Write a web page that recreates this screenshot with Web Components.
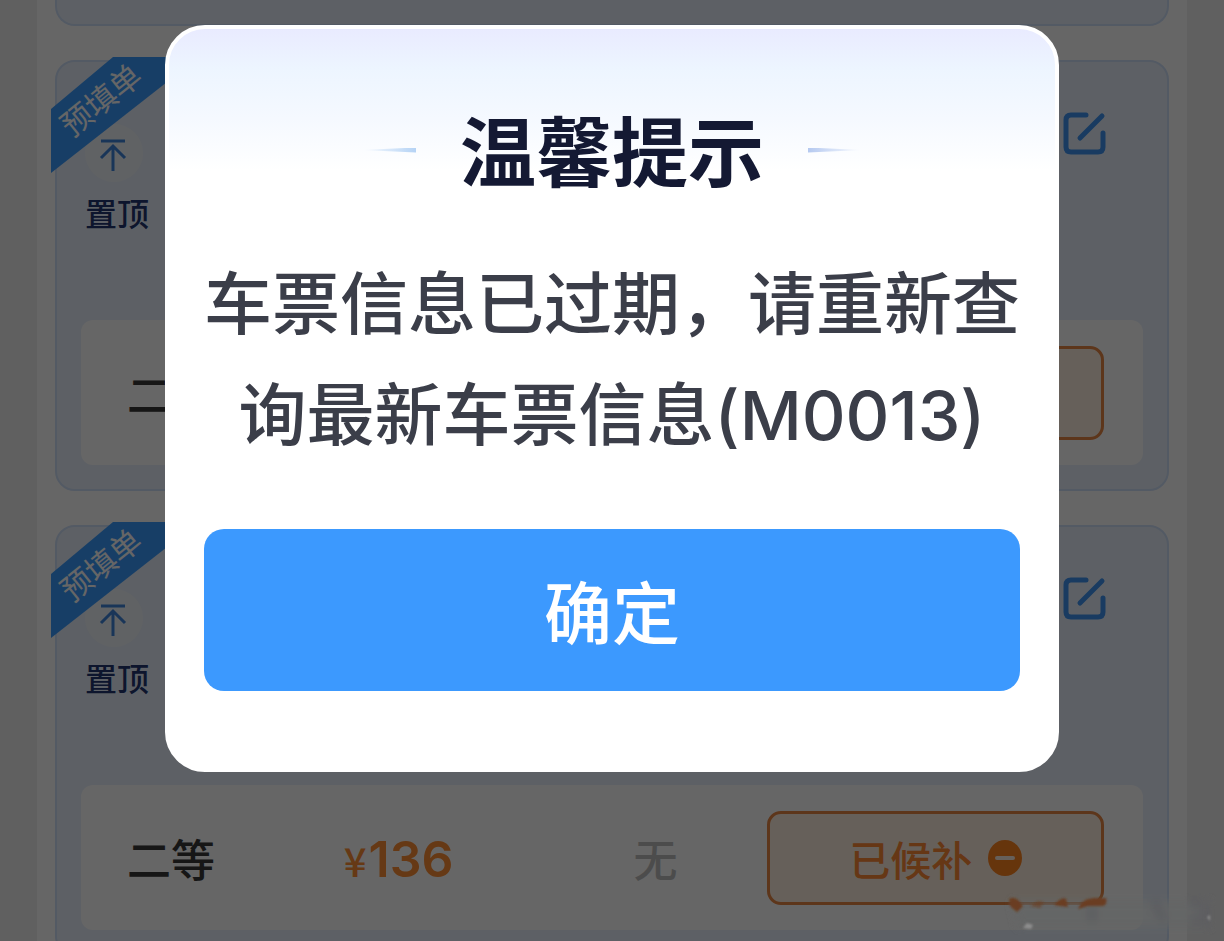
<!DOCTYPE html>
<html lang="zh-CN">
<head>
<meta charset="utf-8">
<meta name="viewport" content="width=device-width, initial-scale=1">
<title>温馨提示</title>
<style>
body { margin: 0; height: 100vh; overflow: hidden; background: #f1f1f1; font-family: "Noto Sans CJK SC", sans-serif; }
</style>
</head>
<body>
<order-page></order-page>

<template id="order-page">
<style>
:host { display: block; position: relative; height: 100%; overflow: hidden; }
main { box-sizing: border-box; margin: 0 37px; padding: 0 18px; background: #fff; display: flex; flex-direction: column; gap: 34px; }
.prev { height: 24px; border: 2px solid #cfe0fa; border-top: 0; border-radius: 0 0 20px 20px; background: #e9f1fc; }
</style>
<main>
  <div class="prev"></div>
  <ticket-card seat="二"></ticket-card>
  <ticket-card seat="二等" price="136" left="无" state="已候补"></ticket-card>
</main>
<water-mark></water-mark>
<notice-dialog heading="温馨提示" action="确定">车票信息已过期，请重新查询最新车票信息(M0013)</notice-dialog>
</template>

<template id="ticket-card">
<style>
:host { display: flex; flex-direction: column; position: relative; box-sizing: border-box; height: 431px; padding: 0 24px 24px; border: 2px solid #cfe0fa; border-radius: 20px; background: #e9f1fc; }
header { flex: 1; display: flex; justify-content: space-between; align-items: flex-start; }
button { font: inherit; border: 0; padding: 0; background: none; }
.pin { display: flex; flex-direction: column; align-items: flex-start; gap: 6px; margin: 62px 0 0 4px; color: #223570; font-size: 32px; line-height: 48px; font-weight: 500; }
.pin svg { display: block; }
.edit { margin: 48px 34px 0 0; }
.edit svg { display: block; }
</style>
<header>
  <button class="pin" type="button">
    <svg width="58" height="58" viewBox="0 0 58 58" fill="none" stroke="#3f86dc" stroke-width="3"><circle cx="29" cy="29" r="29" fill="#f1f5fb" stroke="none"/><path d="M16 17H40M28 47V22M16 34L28 22L40 34"/></svg>
    置顶
  </button>
  <button class="edit" type="button" aria-label="编辑">
    <svg width="48" height="48" viewBox="0 0 48 48" fill="none" stroke="#3f93f2" stroke-width="5" stroke-linecap="round" stroke-linejoin="round"><path d="M25 5H10Q5 5 5 10V37Q5 42 10 42H37Q42 42 42 37V23M41 6L19 28"/></svg>
  </button>
</header>
<corner-ribbon>预填单</corner-ribbon>
<seat-row></seat-row>
</template>

<template id="corner-ribbon">
<style>
:host { display: block; position: absolute; left: -6px; top: -5px; width: 148px; height: 116px; background: #3b9cff; clip-path: polygon(62px 0, 148px 0, 0 116px, 0 52px); }
span { position: absolute; left: 0; top: 22px; width: 98px; line-height: 40px; text-align: center; font-size: 31px; color: #fff; transform: rotate(-39deg); }
</style>
<span><slot></slot></span>
</template>

<template id="seat-row">
<style>
:host { display: grid; grid-template-columns: 217fr 290fr 134fr 337fr; align-items: center; box-sizing: border-box; height: 145px; padding: 0 39px 0 46px; border-radius: 12px; background: #fff; font-size: 44px; line-height: 64px; }
.seat { color: #383838; font-weight: 500; }
.price { padding-top: 4px; color: #ff8f35; font: 600 50px/64px Inter, "Noto Sans CJK SC", sans-serif; }
.price:empty { visibility: hidden; }
small { font: 500 40px/64px "Noto Sans CJK SC", sans-serif; margin-right: 2px; }
.left { color: #bdbdbd; font-weight: 500; }
button { box-sizing: border-box; height: 94px; border: 3px solid #e88745; border-radius: 14px; background: #fff0e2; color: #ff8a35; font: 500 41px/60px "Noto Sans CJK SC", sans-serif; display: flex; align-items: center; justify-content: center; gap: 16px; padding: 0; }
</style>
<span class="seat"></span>
<span class="price"></span>
<span class="left"></span>
<button type="button"><span class="state"></span><svg width="34" height="38" viewBox="0 0 34 38"><ellipse cx="17" cy="19" rx="17" ry="18" fill="#ff8420"/><path d="M9 19H25" stroke="#fff0e2" stroke-width="4" stroke-linecap="round"/></svg></button>
</template>

<template id="water-mark">
<style>
:host { display: block; position: absolute; right: 8px; bottom: 4px; z-index: 3; }
svg { display: block; }
</style>
<svg width="212" height="48" viewBox="0 0 212 48" aria-hidden="true">
  <defs><filter id="soft" x="-10%" y="-30%" width="120%" height="160%"><feGaussianBlur stdDeviation="4"/></filter><filter id="fine"><feGaussianBlur stdDeviation="1"/></filter></defs>
  <g filter="url(#soft)"><path d="M8 12H206V38H14Z" fill="#646566" opacity=".8"/><path d="M88 14V34M150 12L160 32M186 12L202 18V32L186 30" stroke="#55585c" stroke-width="9" fill="none" opacity=".5"/></g>
  <g filter="url(#fine)" fill="#6b3d20"><path d="M5 10Q12 6 19 17L13 23L6 17ZM50 16Q58 7 62 10L64 18ZM74 20Q78 9 92 9H102Q104 16 98 17L84 17Z"/><path d="M26 17L34 12L40 13L36 19Z" opacity=".6"/><path d="M19 39L23 34L29 36L27 40ZM203 28L206 26V32Z" fill="#8d8d8d"/></g>
</svg>
</template>

<template id="notice-dialog">
<style>
:host { position: absolute; inset: 0; box-sizing: border-box; padding: 25px 165px; background: rgba(0, 0, 0, .6); display: block; }
section { box-sizing: border-box; padding: 74px 35px 77px; border: 4px solid #fff; border-radius: 40px; background: linear-gradient(#e9ebff 0, #edf5ff 40px, #f5f9ff 90px, #fff 142px); text-align: center; }
.title { display: flex; align-items: center; justify-content: center; gap: 44px; }
h1 { margin: 0; color: #141933; font-size: 76px; line-height: 90px; font-weight: 700; }
i { width: 54px; height: 5px; margin-top: 4px; background: linear-gradient(90deg, transparent, #b5d3f5); clip-path: polygon(0 50%, 100% 0, 100% 100%); }
i:last-child { background: linear-gradient(270deg, transparent, #b5c9f0); clip-path: polygon(0 0, 100% 50%, 0 100%); }
p { margin: 56px 0 58px; color: #3b3e49; font: 500 68px/111px Inter, "Noto Sans CJK SC", sans-serif; }
button { display: block; width: 100%; height: 162px; padding: 0; border: 0; border-radius: 20px; background: #3c99fe; color: #fff; font: 500 68px/100px "Noto Sans CJK SC", sans-serif; }
</style>
<section role="dialog" aria-modal="true" aria-labelledby="heading">
  <div class="title"><i></i><h1 id="heading"></h1><i></i></div>
  <p><slot></slot></p>
  <button type="button"></button>
</section>
</template>

<script>
class TemplateElement extends HTMLElement {
  connectedCallback() {
    if (this.shadowRoot) return;
    const root = this.attachShadow({ mode: 'open' });
    const content = document.getElementById(this.localName).content.cloneNode(true);
    this.fill(content);
    root.append(content);
  }
  fill() {}
}
class CornerRibbon extends TemplateElement {}
class WaterMark extends TemplateElement {}
class OrderPage extends TemplateElement {}
class TicketCard extends TemplateElement {
  fill(root) {
    const row = root.querySelector('seat-row');
    for (const name of ['seat', 'price', 'left', 'state']) {
      row.setAttribute(name, this.getAttribute(name) || '');
    }
  }
}
class SeatRow extends TemplateElement {
  fill(root) {
    for (const name of ['seat', 'left', 'state']) {
      root.querySelector('.' + name).textContent = this.getAttribute(name);
    }
    const price = this.getAttribute('price');
    if (price) {
      const sign = document.createElement('small');
      sign.textContent = '¥';
      root.querySelector('.price').append(sign, price);
    }
  }
}
class NoticeDialog extends TemplateElement {
  fill(root) {
    root.querySelector('h1').textContent = this.getAttribute('heading');
    root.querySelector('button').textContent = this.getAttribute('action');
  }
}
customElements.define('corner-ribbon', CornerRibbon);
customElements.define('seat-row', SeatRow);
customElements.define('water-mark', WaterMark);
customElements.define('notice-dialog', NoticeDialog);
customElements.define('ticket-card', TicketCard);
customElements.define('order-page', OrderPage);
</script>
</body>
</html>
